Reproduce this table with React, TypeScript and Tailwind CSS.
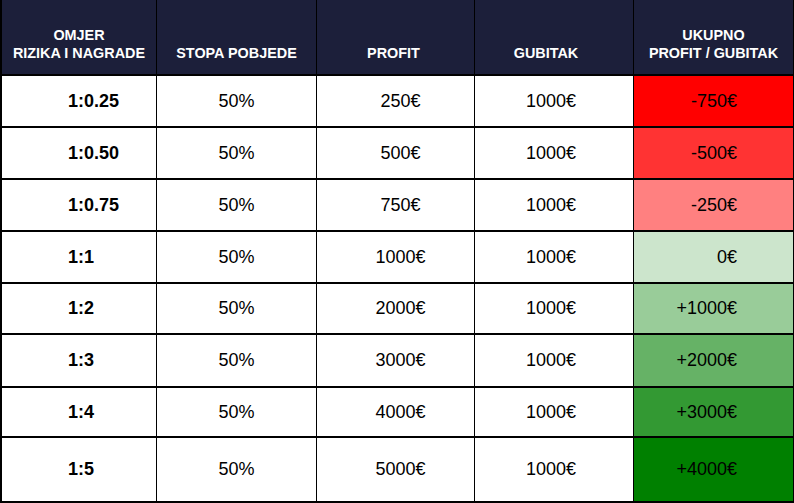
import React from "react";

const rows = [
  { ratio: "1:0.25", rate: "50%", profit: "250€", loss: "1000€", total: "-750€", bg: "bg-[#ff0000]", h: "h-[52px]" },
  { ratio: "1:0.50", rate: "50%", profit: "500€", loss: "1000€", total: "-500€", bg: "bg-[#ff3333]", h: "h-[52px]" },
  { ratio: "1:0.75", rate: "50%", profit: "750€", loss: "1000€", total: "-250€", bg: "bg-[#ff8080]", h: "h-[52px]" },
  { ratio: "1:1", rate: "50%", profit: "1000€", loss: "1000€", total: "0€", bg: "bg-[#cce5cc]", h: "h-[52px]" },
  { ratio: "1:2", rate: "50%", profit: "2000€", loss: "1000€", total: "+1000€", bg: "bg-[#99cc99]", h: "h-[51px]" },
  { ratio: "1:3", rate: "50%", profit: "3000€", loss: "1000€", total: "+2000€", bg: "bg-[#66b266]", h: "h-[53px]" },
  { ratio: "1:4", rate: "50%", profit: "4000€", loss: "1000€", total: "+3000€", bg: "bg-[#339933]", h: "h-[50px]" },
  { ratio: "1:5", rate: "50%", profit: "5000€", loss: "1000€", total: "+4000€", bg: "bg-[#008000]", h: "h-[67px]" },
];

const cols = "grid grid-cols-[157px_160px_158px_159px_160px]";

function App() {
  return (
    <div className="w-[794px] h-[503px] bg-white font-['Liberation_Sans',Arial,sans-serif] text-black">
      {/* header */}
      <div className={`${cols} h-[74px] bg-[#1c1f3a] text-white font-bold text-[14.4px] leading-[18px] text-center`}>
        <div className="flex flex-col justify-end pb-[12px] border-l-2 border-r border-black">
          <span>OMJER</span>
          <span>RIZIKA I NAGRADE</span>
        </div>
        <div className="flex flex-col justify-end pb-[12px] border-r border-black">
          <span>STOPA POBJEDE</span>
        </div>
        <div className="flex flex-col justify-end pb-[12px] pr-[4px] border-r border-black">
          <span>PROFIT</span>
        </div>
        <div className="flex flex-col justify-end pb-[12px] pr-[16px] border-r border-black">
          <span>GUBITAK</span>
        </div>
        <div className="flex flex-col justify-end pb-[12px] border-r border-black">
          <span>UKUPNO</span>
          <span>PROFIT / GUBITAK</span>
        </div>
      </div>

      {rows.map((r, i) => (
        <div key={r.ratio} className={`${cols} ${r.h} text-[18px]`}>
          <div className={`flex items-center pl-[66px] font-bold border-l-2 border-r border-t-2 border-black ${i === rows.length - 1 ? "border-b-2" : ""}`}>
            {r.ratio}
          </div>
          <div className={`flex items-center justify-center border-r border-t-2 border-black ${i === rows.length - 1 ? "border-b-2" : ""}`}>
            {r.rate}
          </div>
          <div className={`flex items-center justify-center pl-[10px] border-r border-t-2 border-black ${i === rows.length - 1 ? "border-b-2" : ""}`}>
            {r.profit}
          </div>
          <div className={`flex items-center justify-center pr-[6px] border-r border-t-2 border-black ${i === rows.length - 1 ? "border-b-2" : ""}`}>
            {r.loss}
          </div>
          <div className={`flex items-center justify-end pr-[56px] ${r.bg} border-r border-t-2 border-black ${i === rows.length - 1 ? "border-b-2" : ""}`}>
            {r.total}
          </div>
        </div>
      ))}
    </div>
  );
}

export default App;
